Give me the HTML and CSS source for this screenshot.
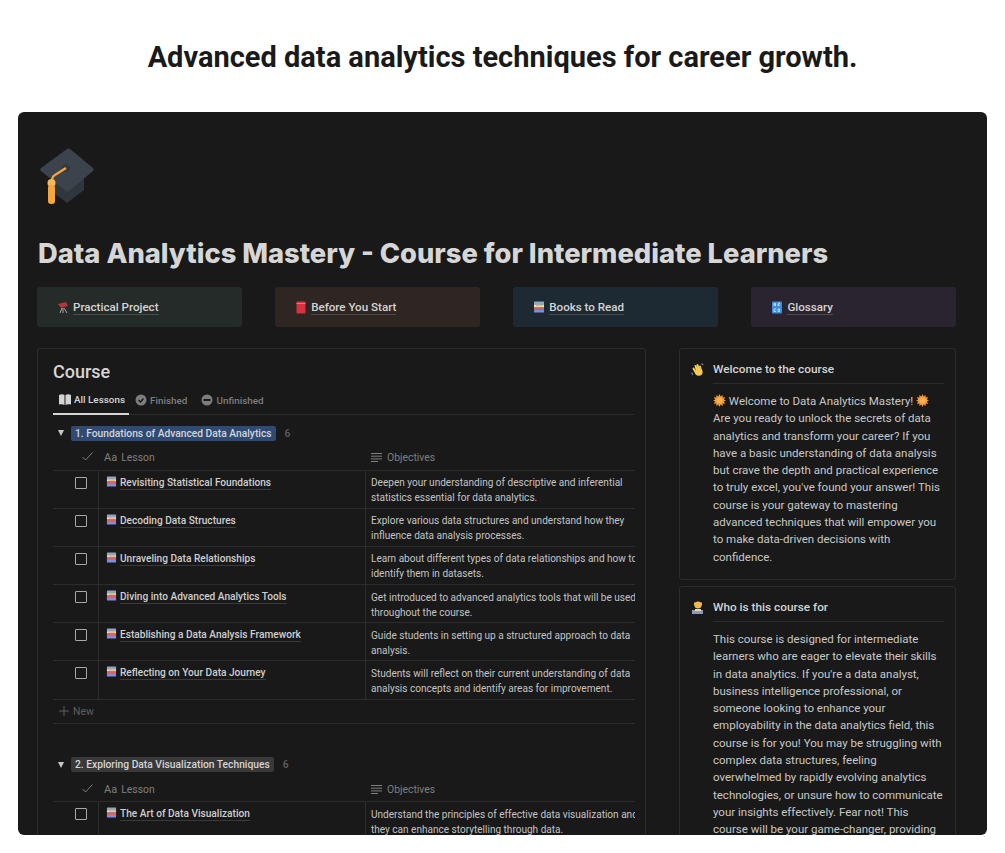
FILE: index.html
```html
<!DOCTYPE html>
<html lang="en">
<head>
  <meta charset="UTF-8" />
  <meta name="viewport" content="width=device-width, initial-scale=1.0"/>
  <title>Data Analytics Mastery</title>
  <link rel="stylesheet" href="styles.css">
</head>

<body>
  <svg class="defs" width="0" height="0" aria-hidden="true">
    <symbol id="books" viewBox="0 0 12 12">
      <rect x="1" y="0.5" width="10" height="3" rx="0.6" fill="#8fa6c4"/>
      <rect x="1" y="3.5" width="10" height="2.6" fill="#e8e2d8"/>
      <rect x="1" y="6" width="10" height="2.8" fill="#d9636b"/>
      <rect x="1" y="8.8" width="10" height="2.7" rx="0.6" fill="#7d8fe0"/>
      <rect x="3" y="4.2" width="7" height="1" fill="#f3b35c"/>
    </symbol>
    <symbol id="sun" viewBox="0 0 14 14">
      <path d="M7 0l1.2 2.6L10.5 1l-.2 2.9 2.9-.3-1.6 2.4L14 7l-2.4 1 1.6 2.4-2.9-.3.2 2.9-2.3-1.6L7 14l-1.2-2.6L3.500 13l.2-2.900-2.900.3L2.400 8 0 7l2.400-1L.8 3.600l2.900.3L3.500 1l2.300 1.600z" fill="#f59a3a"/>
      <circle cx="7" cy="7" r="3" fill="#f9b24e"/>
    </symbol>
  </svg>

  <h1 class="headline">Advanced data analytics techniques for career growth.</h1>

  <div class="shot">
    <svg class="cap" width="56" height="56" viewBox="0 0 56 56">
      <path d="M13 30v13l16 12 17-13V30z" fill="#30363e"/>
      <path d="M29 1c1-.6 2-.6 3 0l23 19c1 1 1 2 0 3L31 43c-1 .8-2 .8-3 0L3 23c-1-1-1-2 0-3z" fill="#3c434c"/>
      <circle cx="28" cy="20" r="4" fill="#333940"/>
      <path d="M28 20L17 27c-2 1-3 3-3 6" fill="none" stroke="#f5a63c" stroke-width="2.200"/>
      <circle cx="13.500" cy="35" r="4" fill="#f7b955"/>
      <rect x="10" y="37" width="7" height="19" rx="3" fill="#f5a63c"/>
    </svg>

    <h2 class="title">Data Analytics Mastery - Course for Intermediate Learners</h2>

    <div class="links">
      <div class="link link-green">
        <svg class="link-ico" width="12" height="13" viewBox="0 0 12 13">
          <path d="M1 3l8-2 2 4-7 2z" fill="#b5353c"/>
          <path d="M5 7l-2 5M6 7v5M7 7l3 5" stroke="#a9a9a9" stroke-width="1" fill="none"/>
        </svg>
        <span>Practical Project</span>
      </div>
      <div class="link link-brown">
        <svg class="link-ico" width="12" height="13" viewBox="0 0 12 13">
          <rect x="1.500" y="0.500" width="9" height="12" rx="1" fill="#d8323f"/>
          <rect x="1.500" y="2" width="9" height="0.800" fill="#f0848c"/>
        </svg>
        <span>Before You Start</span>
      </div>
      <div class="link link-blue">
        <svg class="link-ico" width="12" height="12"><use href="#books"/></svg>
        <span>Books to Read</span>
      </div>
      <div class="link link-purple">
        <svg class="link-ico" width="12" height="13" viewBox="0 0 12 13">
          <rect x="1" y="0.500" width="10" height="12" rx="1" fill="#3f8fd8"/>
          <path d="M3 5V2.500h1.500V5M3 3.800h1.500M7 2h1.500v1.200H7v1.300h1.500M3 8h2M3 8v2.500h2M7 8v2.500h1.500V8z" stroke="#e6f0fa" stroke-width="0.700" fill="none"/>
        </svg>
        <span>Glossary</span>
      </div>
    </div>

    <div class="columns">
      <div class="panel">
        <h3 class="panel-title">Course</h3>

        <div class="tabs">
          <div class="tab tab-on">
            <svg width="12" height="11" viewBox="0 0 12 11"><path d="M0 1c2-1 4-1 5.500 0v10C4 10 2 10 0 10.500zM12 1c-2-1-4-1-5.500 0v10c1.500-1 3.500-1 5.500-.5z" fill="#d4d4d4"/></svg>
            All Lessons
          </div>
          <div class="tab">
            <svg width="12" height="12" viewBox="0 0 12 12"><circle cx="6" cy="6" r="5.500" fill="#7d7d7d"/><path d="M3.500 6l2 2 3-3.500" stroke="#191919" stroke-width="1.300" fill="none"/></svg>
            Finished
          </div>
          <div class="tab">
            <svg width="12" height="12" viewBox="0 0 12 12"><circle cx="6" cy="6" r="5.500" fill="#7d7d7d"/><rect x="2.500" y="5" width="7" height="2" fill="#191919"/></svg>
            Unfinished
          </div>
        </div>

        <div class="group">
          <div class="group-head">
            <span class="arrow"></span>
            <span class="tag tag-blue">1. Foundations of Advanced Data Analytics</span>
            <span class="count">6</span>
          </div>
          <div class="row row-head">
            <div class="cell-check">
              <svg width="11" height="9" viewBox="0 0 11 9"><path d="M.5 5l3 3 7-7.500" stroke="#7f7f7f" fill="none"/></svg>
            </div>
            <div class="cell-name"><span class="aa">Aa</span> Lesson</div>
            <div class="cell-obj">
              <svg width="11" height="9" viewBox="0 0 11 9"><path d="M0 .5h11M0 3.200h11M0 5.900h11M0 8.500h7" stroke="#7f7f7f"/></svg>
              Objectives
            </div>
          </div>
          <div class="row">
            <div class="cell-check"><span class="box"></span></div>
            <div class="cell-name"><svg class="row-ico" width="11" height="11"><use href="#books"/></svg><span class="lesson">Revisiting Statistical Foundations</span></div>
            <div class="cell-obj">Deepen your understanding of descriptive and inferential statistics essential for data analytics.</div>
          </div>
          <div class="row">
            <div class="cell-check"><span class="box"></span></div>
            <div class="cell-name"><svg class="row-ico" width="11" height="11"><use href="#books"/></svg><span class="lesson">Decoding Data Structures</span></div>
            <div class="cell-obj">Explore various data structures and understand how they influence data analysis processes.</div>
          </div>
          <div class="row">
            <div class="cell-check"><span class="box"></span></div>
            <div class="cell-name"><svg class="row-ico" width="11" height="11"><use href="#books"/></svg><span class="lesson">Unraveling Data Relationships</span></div>
            <div class="cell-obj">Learn about different types of data relationships and how to identify them in datasets.</div>
          </div>
          <div class="row">
            <div class="cell-check"><span class="box"></span></div>
            <div class="cell-name"><svg class="row-ico" width="11" height="11"><use href="#books"/></svg><span class="lesson">Diving into Advanced Analytics Tools</span></div>
            <div class="cell-obj">Get introduced to advanced analytics tools that will be used throughout the course.</div>
          </div>
          <div class="row">
            <div class="cell-check"><span class="box"></span></div>
            <div class="cell-name"><svg class="row-ico" width="11" height="11"><use href="#books"/></svg><span class="lesson">Establishing a Data Analysis Framework</span></div>
            <div class="cell-obj">Guide students in setting up a structured approach to data analysis.</div>
          </div>
          <div class="row">
            <div class="cell-check"><span class="box"></span></div>
            <div class="cell-name"><svg class="row-ico" width="11" height="11"><use href="#books"/></svg><span class="lesson">Reflecting on Your Data Journey</span></div>
            <div class="cell-obj">Students will reflect on their current understanding of data analysis concepts and identify areas for improvement.</div>
          </div>
          <div class="new-row">
            <svg width="10" height="10" viewBox="0 0 10 10"><path d="M5 0v10M0 5h10" stroke="#5f5f5f"/></svg>
            New
          </div>
        </div>

        <div class="group group-two">
          <div class="group-head">
            <span class="arrow"></span>
            <span class="tag tag-gray">2. Exploring Data Visualization Techniques</span>
            <span class="count">6</span>
          </div>
          <div class="row row-head">
            <div class="cell-check">
              <svg width="11" height="9" viewBox="0 0 11 9"><path d="M.5 5l3 3 7-7.500" stroke="#7f7f7f" fill="none"/></svg>
            </div>
            <div class="cell-name"><span class="aa">Aa</span> Lesson</div>
            <div class="cell-obj">
              <svg width="11" height="9" viewBox="0 0 11 9"><path d="M0 .5h11M0 3.200h11M0 5.900h11M0 8.500h7" stroke="#7f7f7f"/></svg>
              Objectives
            </div>
          </div>
          <div class="row">
            <div class="cell-check"><span class="box"></span></div>
            <div class="cell-name"><svg class="row-ico" width="11" height="11"><use href="#books"/></svg><span class="lesson">The Art of Data Visualization</span></div>
            <div class="cell-obj">Understand the principles of effective data visualization and how they can enhance storytelling through data.</div>
          </div>
        </div>
      </div>

      <div class="side">
        <div class="card">
          <div class="card-head">
            <svg class="card-ico" width="13" height="13" viewBox="0 0 13 13">
              <path d="M5 10L2.500 5.500M6.500 9L4.500 3M8 8.500L6.500 2M10 8.500L9 3.500" stroke="#f6c94e" stroke-width="2" stroke-linecap="round"/>
              <circle cx="7.800" cy="9" r="3.800" fill="#f6c94e"/>
              <path d="M.8 9.500l.8 2.500M10.500.5l1.800 1.500" stroke="#5b86a8" stroke-width="1.200"/>
            </svg>
            <span>Welcome to the course</span>
          </div>
          <p class="card-text"><svg class="sun" width="13" height="13"><use href="#sun"/></svg> Welcome to Data Analytics Mastery! <svg class="sun" width="13" height="13"><use href="#sun"/></svg> Are you ready to unlock the secrets of data analytics and transform your career? If you have a basic understanding of data analysis but crave the depth and practical experience to truly excel, you've found your answer! This course is your gateway to mastering advanced techniques that will empower you to make data-driven decisions with confidence.</p>
        </div>
        <div class="card">
          <div class="card-head">
            <svg class="card-ico" width="13" height="13" viewBox="0 0 13 13">
              <circle cx="7" cy="4" r="3.500" fill="#f2b84b"/>
              <path d="M3 1.500h8v3H3z" fill="#f2b84b"/>
              <path d="M1 9h11v4H1z" fill="#8f9bb3"/>
              <path d="M4 8h6v2H4z" fill="#e9d9b8"/>
            </svg>
            <span>Who is this course for</span>
          </div>
          <p class="card-text">This course is designed for intermediate learners who are eager to elevate their skills in data analytics. If you're a data analyst, business intelligence professional, or someone looking to enhance your employability in the data analytics field, this course is for you! You may be struggling with complex data structures, feeling overwhelmed by rapidly evolving analytics technologies, or unsure how to communicate your insights effectively. Fear not! This course will be your game-changer, providing</p>
        </div>
      </div>
    </div>
  </div>
</body>
</html>
```

FILE: styles.css
```css
body {
  font-family: "Roboto", "Liberation Sans", sans-serif;
  background-color: #ffffff;
  margin: 0;
  padding: 0;
}

.defs {
  position: absolute;
}

.headline {
  font-size: 29px;
  font-weight: 700;
  line-height: 34px;
  color: #1a1a1a;
  text-align: center;
  margin: 0;
  padding: 40px 0 38px;
}

.shot {
  height: 723px;
  margin: 0 18px;
  padding: 36px 31px 0 19px;
  box-sizing: border-box;
  background-color: #191919;
  border-radius: 6px;
  overflow: hidden;
}

.cap {
  display: block;
  margin-left: 1px;
}

.title {
  font-family: "Inter", sans-serif;
  font-size: 27.300px;
  font-weight: 800;
  line-height: 36px;
  color: #d6d6d6;
  margin: 32px 0 15px 1px;
  white-space: nowrap;
}

.links {
  display: grid;
  grid-template-columns: repeat(4, 1fr);
  gap: 33.5px;
}

.link {
  display: flex;
  align-items: center;
  gap: 4px;
  height: 40px;
  padding-left: 20px;
  border-radius: 3px;
  font-size: 11.600px;
  font-weight: 500;
  color: #d4d4d4;
}

.link span {
  border-bottom: 1px solid #4a4a4a;
  line-height: 14px;
}

.link-green { background-color: #242b29; }
.link-brown { background-color: #2f2623; }
.link-blue { background-color: #1e2a33; }
.link-purple { background-color: #2a2430; }

.columns {
  display: grid;
  grid-template-columns: 609px 277px;
  gap: 33px;
  margin-top: 21px;
}

.panel {
  height: 500px;
  padding: 0 11px 0 15px;
  border: 1px solid #2c2c2c;
  border-radius: 3px;
  overflow: hidden;
}

.panel-title {
  font-size: 18px;
  font-weight: 500;
  line-height: 22px;
  color: #d6d6d6;
  margin: 12px 0 3px;
}

.tabs {
  display: flex;
  height: 28px;
  border-bottom: 1px solid #2c2c2c;
}

.tab {
  display: flex;
  align-items: center;
  gap: 3px;
  height: 28px;
  padding: 0 6px;
  box-sizing: border-box;
  font-size: 9.900px;
  font-weight: 500;
  color: #7d7d7d;
}

.tab:last-child {
  margin-left: 2px;
}

.tab-on {
  height: 29px;
  padding-right: 4px;
  color: #d4d4d4;
  border-bottom: 2px solid #d4d4d4;
}

.group {
  width: 582px;
  overflow: hidden;
}

.group-two {
  margin-top: 23px;
}

.group-head {
  display: flex;
  align-items: center;
  height: 30.500px;
  box-sizing: border-box;
  padding: 6px 0 0 5px;
  font-size: 10.250px;
  font-weight: 500;
}

.arrow {
  width: 0;
  height: 0;
  margin-right: 7px;
  border-left: 3.500px solid transparent;
  border-right: 3.500px solid transparent;
  border-top: 6px solid #c8c8c8;
}

.tag {
  padding: 1px 4px;
  border-radius: 2px;
  line-height: 13px;
  color: #d4d4d4;
}

.tag-blue { background-color: #2f4a73; }
.tag-gray { background-color: #393939; }

.count {
  margin-left: 9px;
  color: #5f5f5f;
}

.row {
  display: grid;
  grid-template-columns: 46px 267px 297px;
  width: 610px;
  height: 38.200px;
  box-sizing: border-box;
  border-bottom: 1px solid #2c2c2c;
  overflow: hidden;
}

.row-head {
  height: 25px;
  align-items: center;
  font-size: 10.400px;
  color: #7f7f7f;
}

.row-head .cell-check,
.row-head .cell-name,
.row-head .cell-obj {
  border-right: 0;
  height: auto;
  padding-top: 0;
}

.row-head .cell-check {
  text-align: right;
  padding: 0 6px 0 0;
}

.row-head .cell-name {
  padding-left: 5px;
  font-size: 10.400px;
  font-weight: 400;
  color: #7f7f7f;
}

.row-head .cell-obj {
  display: flex;
  align-items: center;
  gap: 5px;
  color: #7f7f7f;
  font-size: 10.400px;
}

.aa {
  font-size: 11px;
  margin-right: 1px;
}

.cell-check {
  box-sizing: border-box;
  padding: 6px 0 0 22px;
  border-right: 1px solid #2c2c2c;
}

.box {
  display: block;
  width: 10px;
  height: 10px;
  border: 1px solid #a8a8a8;
  border-radius: 1px;
}

.cell-name {
  display: flex;
  align-items: flex-start;
  gap: 3px;
  padding: 5px 0 0 7px;
  border-right: 1px solid #2c2c2c;
  font-size: 10.150px;
  font-weight: 500;
  color: #cfcfcf;
}

.row-ico {
  flex: none;
}

.lesson {
  line-height: 13px;
  border-bottom: 1px solid #3a3a3a;
}

.cell-obj {
  padding: 4.500px 0 0 5px;
  font-size: 10.050px;
  line-height: 15px;
  color: #c4c4c4;
}

.new-row {
  display: flex;
  align-items: center;
  gap: 4px;
  height: 23px;
  padding-left: 6px;
  border-bottom: 1px solid #2c2c2c;
  font-size: 10.400px;
  color: #5f5f5f;
}

.side {
  display: flex;
  flex-direction: column;
  gap: 6px;
}

.card {
  padding: 0 11px 13px 33px;
  border: 1px solid #2c2c2c;
  border-radius: 3px;
  position: relative;
}

.card-head {
  height: 35px;
  box-sizing: border-box;
  padding-top: 6px;
  display: flex;
  align-items: center;
  border-bottom: 1px solid #2c2c2c;
  font-size: 11.800px;
  font-weight: 500;
  color: #d4d4d4;
}

.card-ico {
  position: absolute;
  left: 11px;
  top: 14px;
}

.card-text {
  font-size: 11.500px;
  line-height: 17.300px;
  color: #c8c8c8;
  margin: 9px 0 0;
}

.sun {
  vertical-align: -2px;
}
```
